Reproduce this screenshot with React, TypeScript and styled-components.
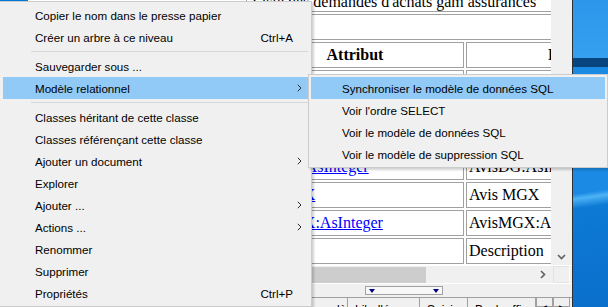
import React from "react";
import styled, { createGlobalStyle } from "styled-components";

type MenuEntry =
  | { kind: "item"; label: string; shortcut?: string; sub?: boolean; active?: boolean }
  | { kind: "sep" };

const mainMenu: MenuEntry[] = [
  { kind: "item", label: "Copier le nom dans le presse papier" },
  { kind: "item", label: "Créer un arbre à ce niveau", shortcut: "Ctrl+A" },
  { kind: "sep" },
  { kind: "item", label: "Sauvegarder sous ..." },
  { kind: "item", label: "Modèle relationnel", sub: true, active: true },
  { kind: "sep" },
  { kind: "item", label: "Classes héritant de cette classe" },
  { kind: "item", label: "Classes référençant cette classe" },
  { kind: "item", label: "Ajouter un document", sub: true },
  { kind: "item", label: "Explorer" },
  { kind: "item", label: "Ajouter ...", sub: true },
  { kind: "item", label: "Actions ...", sub: true },
  { kind: "item", label: "Renommer" },
  { kind: "item", label: "Supprimer" },
  { kind: "item", label: "Propriétés", shortcut: "Ctrl+P" },
];

const sqlMenu: MenuEntry[] = [
  { kind: "item", label: "Synchroniser le modèle de données SQL", active: true },
  { kind: "item", label: "Voir l'ordre SELECT" },
  { kind: "item", label: "Voir le modèle de données SQL" },
  { kind: "item", label: "Voir le modèle de suppression SQL" },
];

const rows = [
  { attr: "AvisDG", label: "Avis DG" },
  { attr: "AvisDG:AsString", label: "AvisDG:AsString" },
  { attr: "AvisDG:AsDate", label: "AvisDG:AsDate" },
  { attr: "AvisDG:AsInteger", label: "AvisDG:AsInteger" },
  { attr: "AvisMGX", label: "Avis MGX" },
  { attr: "AvisMGX:AsInteger", label: "AvisMGX:AsInteger" },
  { attr: "", label: "Description" },
];

const tabs = [
  { label: "Général", width: 120 },
  { label: "Description", width: 124 },
  { label: "Contrôle du modèle", width: 104 },
  { label: "Libellés", width: 72 },
  { label: "Saisie", width: 48 },
  { label: "Back-office", width: 68 },
];

const GlobalStyle = createGlobalStyle`
  html, body {
    margin: 0;
    padding: 0;
  }
  body {
    width: 608px;
    height: 307px;
    overflow: hidden;
    background: #f0f0f0;
    font-family: "Liberation Sans", Arial, sans-serif;
  }
`;

const Chevron = ({ dir }: { dir: "right" | "down" | "menu" }) => {
  if (dir === "menu") {
    return (
      <svg width="5" height="8" viewBox="0 0 5 8">
        <path d="M0.8 0.8 L4 4 L0.8 7.2" fill="none" stroke="#2b2b2b" strokeWidth="1" />
      </svg>
    );
  }
  if (dir === "down") {
    return (
      <svg width="9" height="6" viewBox="0 0 9 6">
        <path d="M1 1 L4.5 4.5 L8 1" fill="none" stroke="#606060" strokeWidth="1.6" />
      </svg>
    );
  }
  return (
    <svg width="6" height="9" viewBox="0 0 6 9">
      <path d="M1 1 L4.5 4.5 L1 8" fill="none" stroke="#606060" strokeWidth="1.6" />
    </svg>
  );
};

const Menu = ({ entries, indent }: { entries: MenuEntry[]; indent: number }) => (
  <>
    {entries.map((e, i) =>
      e.kind === "sep" ? (
        <Separator key={`sep-${i}`} />
      ) : (
        <Item key={e.label} $active={!!e.active} $indent={indent}>
          <Label>{e.label}</Label>
          {e.shortcut && <Shortcut>{e.shortcut}</Shortcut>}
          {e.sub && (
            <Arrow>
              <Chevron dir="menu" />
            </Arrow>
          )}
        </Item>
      )
    )}
  </>
);

const App = () => {
  return (
    <Screen>
      <GlobalStyle />
      <Window>
        <ContentRow>
          <TreePane>
            <TreeSelection />
          </TreePane>
          <Viewport>
            <DataTable>
              <colgroup>
                <col style={{ width: 218 }} />
                <col style={{ width: 211 }} />
              </colgroup>
              <tbody>
                <tr>
                  <TitleCell colSpan={2}>Liste des demandes d'achats gam assurances</TitleCell>
                </tr>
                <tr>
                  <Cell colSpan={2}>&nbsp;</Cell>
                </tr>
                <tr>
                  <HeadCell>Attribut</HeadCell>
                  <HeadCell>Libellé</HeadCell>
                </tr>
                {rows.map((r) => (
                  <tr key={r.label}>
                    <Cell>{r.attr ? <Link href="#">{r.attr}</Link> : "\u00a0"}</Cell>
                    <Cell>{r.label}</Cell>
                  </tr>
                ))}
              </tbody>
            </DataTable>
          </Viewport>
          <VScroll>
            <ScrollButton>
              <Chevron dir="down" />
            </ScrollButton>
          </VScroll>
        </ContentRow>
        <HScrollRow>
          <HScrollLead />
          <HTrack>
            <Thumb />
            <ScrollButton>
              <Chevron dir="right" />
            </ScrollButton>
          </HTrack>
          <Corner />
        </HScrollRow>
        <ToolBand>
          <Dropdown>
            <Tri />
            <Tri />
          </Dropdown>
        </ToolBand>
        <TabStrip>
          {tabs.map((t) => (
            <Tab key={t.label} $width={t.width}>
              {t.label}
            </Tab>
          ))}
          <TabNav>◄</TabNav>
          <TabNav>►</TabNav>
        </TabStrip>
      </Window>
      <Desktop>
        <DeskTop />
        <DeskBand />
        <DeskBottom />
      </Desktop>

      <MenuPanel $left={-1} $top={1} $width={313} $padX={3}>
        <Menu entries={mainMenu} indent={32} />
      </MenuPanel>
      <MenuPanel $left={308} $top={74} $width={300} $padX={2}>
        <Menu entries={sqlMenu} indent={31} />
      </MenuPanel>
    </Screen>
  );
};

const Screen = styled.div`
  position: relative;
  display: flex;
  width: 608px;
  height: 307px;
  overflow: hidden;
`;

const Window = styled.div`
  display: flex;
  flex-direction: column;
  width: 573px;
  box-sizing: border-box;
  border-right: 1px solid #2f2f2f;
  background: #f0f0f0;
`;

const ContentRow = styled.div`
  display: flex;
  height: 265px;
  border-bottom: 1px solid #ffffff;
`;

const TreePane = styled.div`
  width: 244px;
  background: #ffffff;
`;

const TreeSelection = styled.div`
  width: 28px;
  height: 18px;
  background: #0078d7;
`;

const Viewport = styled.div`
  width: 307px;
  overflow: hidden;
  background: #ffffff;
`;

const DataTable = styled.table`
  table-layout: fixed;
  width: 435px;
  margin-top: -10px;
  border-collapse: separate;
  border-spacing: 2px;
  font-family: "Liberation Serif", "Times New Roman", serif;
  font-size: 16px;
  color: #000000;
`;

const Cell = styled.td`
  border: 1px solid #a0a0a0;
  padding: 3px 2px;
  line-height: 18px;
  white-space: nowrap;
  overflow: hidden;
`;

const TitleCell = styled(Cell)`
  padding: 0 2px 0 5px;
`;

const HeadCell = styled.th`
  border: 1px solid #a0a0a0;
  padding: 3px 2px;
  line-height: 18px;
  font-weight: bold;
  text-align: center;
  white-space: nowrap;
  overflow: hidden;
`;

const Link = styled.a`
  color: #0000ff;
  text-decoration: underline;
`;

const VScroll = styled.div`
  display: flex;
  flex-direction: column;
  justify-content: flex-end;
  width: 17px;
  margin-left: 2px;
  background: #f0f0f0;
`;

const ScrollButton = styled.div`
  display: flex;
  align-items: center;
  justify-content: center;
  width: 17px;
  height: 17px;
  flex-shrink: 0;
`;

const HScrollRow = styled.div`
  display: flex;
  height: 17px;
`;

const HScrollLead = styled.div`
  width: 244px;
`;

const HTrack = styled.div`
  display: flex;
  justify-content: space-between;
  width: 307px;
  background: #f0f0f0;
`;

const Thumb = styled.div`
  width: 165px;
  margin: 1px 0 0 17px;
  background: #cdcdcd;
`;

const Corner = styled.div`
  width: 15px;
  margin-left: 2px;
  border: 1px solid #e3e3e3;
  border-right-color: #ffffff;
  background: #f0f0f0;
`;

const ToolBand = styled.div`
  display: flex;
  height: 15px;
  padding-top: 2px;
  border-top: 1px solid #ffffff;
  box-sizing: border-box;
`;

const Dropdown = styled.div`
  display: flex;
  align-items: center;
  justify-content: space-between;
  width: 78px;
  height: 9px;
  margin-left: 365px;
  padding: 0 3px;
  box-sizing: border-box;
  border: 1px solid #a0a0a0;
  background: #f7f7f7;
`;

const Tri = styled.span`
  width: 0;
  height: 0;
  border-left: 3px solid transparent;
  border-right: 3px solid transparent;
  border-top: 4px solid #000080;
`;

const TabStrip = styled.div`
  display: flex;
  height: 10px;
  overflow: hidden;
  border-top: 1px solid #a0a0a0;
  font-family: "Liberation Sans", Arial, sans-serif;
  font-size: 12px;
`;

const Tab = styled.div<{ $width: number }>`
  flex-shrink: 0;
  width: ${(p) => p.$width}px;
  box-sizing: border-box;
  padding: 5px 0 0 7px;
  border-right: 1px solid #a0a0a0;
  line-height: 14px;
  white-space: nowrap;
  overflow: hidden;
  color: #000000;
`;

const TabNav = styled.div`
  display: flex;
  justify-content: center;
  width: 17px;
  box-sizing: border-box;
  border: 1px solid #a0a0a0;
  border-top: none;
  font-size: 8px;
  line-height: 14px;
  padding-top: 3px;
  color: #000000;
`;

const Desktop = styled.div`
  display: flex;
  flex-direction: column;
  flex: 1;
`;

const DeskTop = styled.div`
  height: 58px;
  background: linear-gradient(180deg, #2c97ea 0%, #34a0ef 100%);
`;

const DeskBand = styled.div`
  height: 9px;
  background: #08457f;
`;

const DeskBottom = styled.div`
  flex: 1;
  background: linear-gradient(172deg, #1b8ae4 0%, #1b8ae4 52%, #4db3f5 54%, #0d7ad6 58%, #0a6fcb 100%);
`;

const MenuPanel = styled.ul<{ $left: number; $top: number; $width: number; $padX: number }>`
  position: absolute;
  left: ${(p) => p.$left}px;
  top: ${(p) => p.$top}px;
  width: ${(p) => p.$width}px;
  box-sizing: border-box;
  margin: 0;
  padding: 2px ${(p) => p.$padX}px;
  list-style: none;
  background: #f0f0f0;
  border: 1px solid #cccccc;
  box-shadow: 2px 2px 2px rgba(0, 0, 0, 0.18);
  font-family: "Liberation Sans", Arial, sans-serif;
  font-size: 11.6px;
  color: #000000;
`;

const Item = styled.li<{ $active: boolean; $indent: number }>`
  display: flex;
  align-items: center;
  height: 22px;
  padding: 0 6px 0 ${(p) => p.$indent}px;
  background: ${(p) => (p.$active ? "#91c9f7" : "transparent")};
  white-space: nowrap;
`;

const Label = styled.span`
  flex: 1;
`;

const Shortcut = styled.span`
  margin-right: 9px;
`;

const Arrow = styled.span`
  display: flex;
  align-items: center;
`;

const Separator = styled.li`
  height: 7px;
  padding-top: 3px;
  box-sizing: border-box;

  &::after {
    content: "";
    display: block;
    height: 1px;
    margin-left: 28px;
    background: #d7d7d7;
  }
`;

export default App;
